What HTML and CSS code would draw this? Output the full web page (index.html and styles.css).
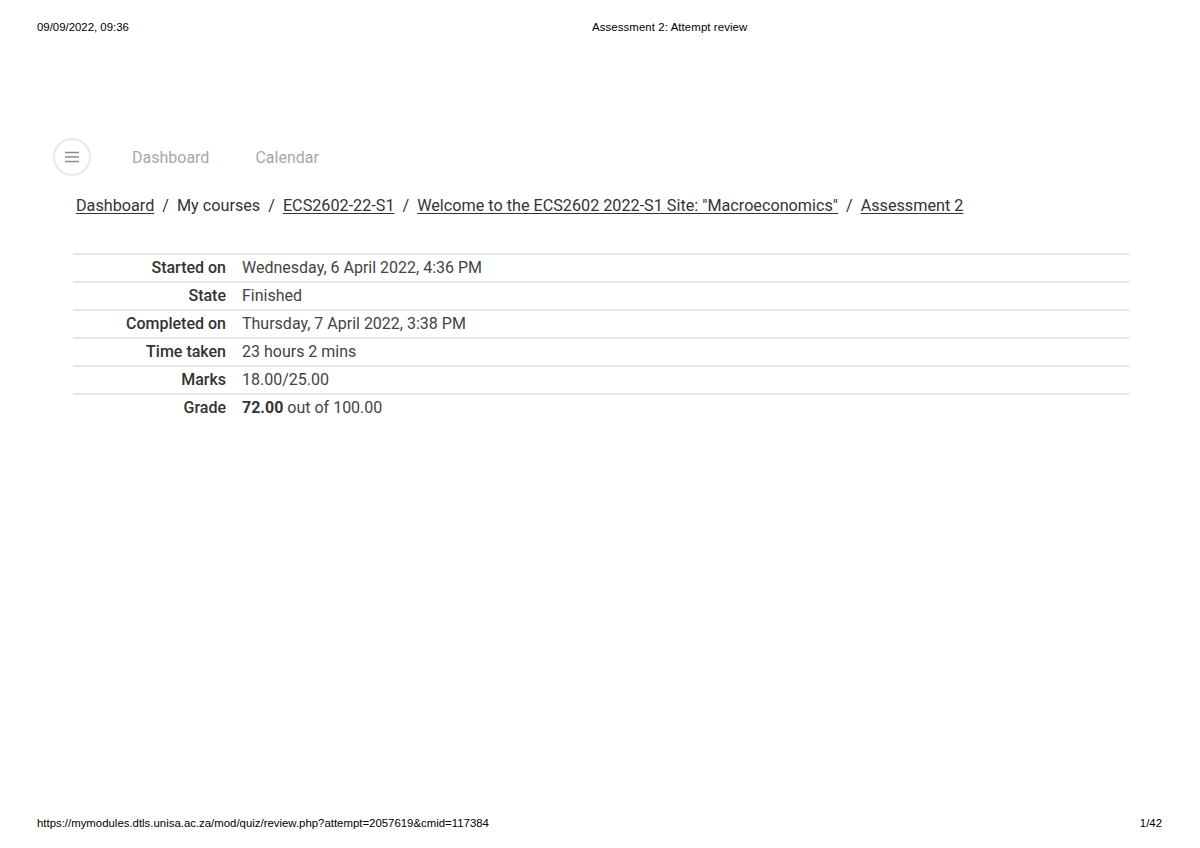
FILE: index.html
```html
<!DOCTYPE html>
<html>
<head>
<meta charset="utf-8">
<link rel="stylesheet" href="styles.css">
</head>
<body>
<div class="pagehead">
  <span class="ph-left">09/09/2022, 09:36</span>
  <span class="ph-center">Assessment 2: Attempt review</span>
</div>
<nav class="topnav">
  <div class="burger">
    <svg width="16" height="12" viewBox="0 0 16 12"><path d="M1 1.5H15M1 6H15M1 10.5H15" stroke="#8a8a8a" stroke-width="1.4" fill="none"/></svg>
  </div>
  <a class="navlink">Dashboard</a>
  <a class="navlink">Calendar</a>
</nav>
<div class="crumbs">
  <a class="crumb">Dashboard</a><span class="sep">/</span><span class="plain">My courses</span><span class="sep">/</span><a class="crumb">ECS2602-22-S1</a><span class="sep">/</span><a class="crumb">Welcome to the ECS2602 2022-S1 Site: "Macroeconomics"</a><span class="sep">/</span><a class="crumb">Assessment 2</a>
</div>
<table class="summary">
  <tr><th>Started on</th><td>Wednesday, 6 April 2022, 4:36 PM</td></tr>
  <tr><th>State</th><td>Finished</td></tr>
  <tr><th>Completed on</th><td>Thursday, 7 April 2022, 3:38 PM</td></tr>
  <tr><th>Time taken</th><td>23 hours 2 mins</td></tr>
  <tr><th>Marks</th><td>18.00/25.00</td></tr>
  <tr><th>Grade</th><td><b>72.00</b> out of 100.00</td></tr>
</table>
<div class="spacer"></div>
<div class="pagefoot">
  <span>https://mymodules.dtls.unisa.ac.za/mod/quiz/review.php?attempt=2057619&amp;cmid=117384</span>
  <span>1/42</span>
</div>
</body>
</html>
```
FILE: styles.css
```css
html, body { margin: 0; padding: 0; background: #fff; }
body {
  width: 1200px;
  height: 848px;
  display: flex;
  flex-direction: column;
  font-family: Roboto, "Liberation Sans", sans-serif;
  color: #333;
}
.pagehead {
  display: flex;
  padding: 21px 37px 0 37px;
  font-family: "Liberation Sans", Arial, sans-serif;
  font-size: 11.4px;
  color: #000;
  line-height: 12px;
}
.ph-left { width: 555px; }
.pagehead .ph-center { letter-spacing: 0.1px; }
.topnav {
  display: flex;
  align-items: center;
  margin-top: 105px;
  padding-left: 53px;
  height: 38px;
}
.burger {
  width: 34px;
  height: 34px;
  border: 2px solid #e6e9ee;
  border-radius: 50%;
  display: flex;
  align-items: center;
  justify-content: center;
  margin-right: 41px;
}
.navlink {
  font-size: 16px;
  color: #a8a8a8;
  margin-right: 46px;
}
.crumbs {
  margin-top: 20px;
  padding-left: 76px;
  font-size: 16.2px;
  line-height: 20px;
  color: #333;
}
.crumb { text-decoration: underline; text-underline-offset: 2px; color: #333; }
.sep { margin: 0 8px; }
.summary {
  margin: 37px 71px 0 73px;
  width: 1056px;
  border-collapse: collapse;
  font-size: 16px;
}
.summary tr { border-top: 2px solid #e3e5e8; height: 28px; }
.summary th {
  width: 153px;
  text-align: right;
  font-weight: 500;
  color: #333;
  padding: 0 16px 2px 0;
}
.summary td {
  text-align: left;
  color: #444;
  padding: 0 0 2px 0;
}
.summary b { font-weight: 700; color: #333; }
.spacer { flex: 1; }
.pagefoot {
  display: flex;
  justify-content: space-between;
  padding: 0 38px 19px 37px;
  font-family: "Liberation Sans", Arial, sans-serif;
  font-size: 11.4px;
  color: #000;
  line-height: 12px;
}
```
